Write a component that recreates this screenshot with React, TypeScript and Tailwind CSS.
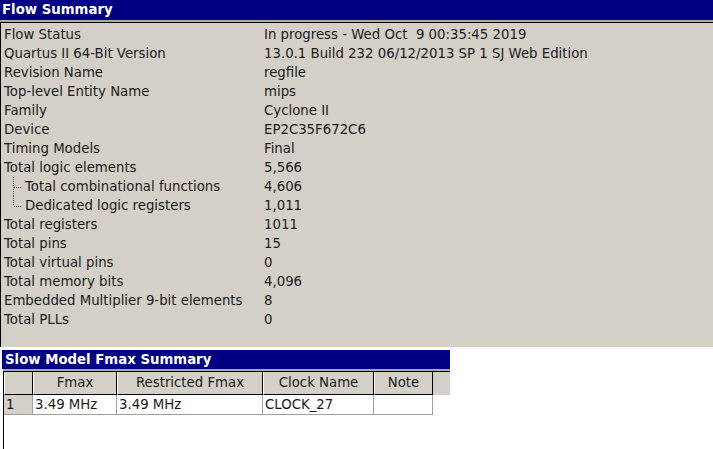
import React from 'react';

const rows: { label: string; value: string; tree?: 'mid' | 'end' }[] = [
  { label: 'Flow Status', value: 'In progress - Wed Oct\u00a0\u00a09 00:35:45 2019' },
  { label: 'Quartus II 64-Bit Version', value: '13.0.1 Build 232 06/12/2013 SP 1 SJ Web Edition' },
  { label: 'Revision Name', value: 'regfile' },
  { label: 'Top-level Entity Name', value: 'mips' },
  { label: 'Family', value: 'Cyclone II' },
  { label: 'Device', value: 'EP2C35F672C6' },
  { label: 'Timing Models', value: 'Final' },
  { label: 'Total logic elements', value: '5,566' },
  { label: 'Total combinational functions', value: '4,606', tree: 'mid' },
  { label: 'Dedicated logic registers', value: '1,011', tree: 'end' },
  { label: 'Total registers', value: '1011' },
  { label: 'Total pins', value: '15' },
  { label: 'Total virtual pins', value: '0' },
  { label: 'Total memory bits', value: '4,096' },
  { label: 'Embedded Multiplier 9-bit elements', value: '8' },
  { label: 'Total PLLs', value: '0' },
];

function TreeLine({ kind }: { kind: 'mid' | 'end' }) {
  return (
    <svg width="21" height="19" className="shrink-0">
      <line x1="9.5" y1="0" x2="9.5" y2={kind === 'mid' ? 19 : 10} stroke="#555" strokeDasharray="1 1" />
      <line x1="10" y1="10.5" x2="18" y2="10.5" stroke="#555" strokeDasharray="1 1" />
    </svg>
  );
}

const cols = [
  { w: 'w-[29px]', label: '' },
  { w: 'w-[84px]', label: 'Fmax' },
  { w: 'w-[146px]', label: 'Restricted Fmax' },
  { w: 'w-[111px]', label: 'Clock Name' },
  { w: 'w-[59px]', label: 'Note' },
];

const data = ['1', '3.49 MHz', '3.49 MHz', 'CLOCK_27', ''];

export default function App() {
  return (
    <div className="w-[713px] h-[449px] bg-white overflow-hidden text-[13.3px] text-[#1a1a1a]" style={{ fontFamily: '"DejaVu Sans", sans-serif' }}>
      {/* Flow Summary */}
      <div className="h-[20px] bg-[#000080] text-white font-bold pl-[2px] leading-[20px]">Flow Summary</div>
      <div className="border-t-2 border-[#a8a8a8]">
        <div className="border-t border-l border-black bg-[#d4d0c8] h-[325px] pt-[2px]">
          {rows.map((r) => (
            <div key={r.label} className="flex h-[19px] items-center leading-[19px]">
              <div className="w-[263px] flex items-center pl-[3px] shrink-0">
                {r.tree && <TreeLine kind={r.tree} />}
                <span>{r.label}</span>
              </div>
              <div>{r.value}</div>
            </div>
          ))}
        </div>
      </div>

      {/* Slow Model Fmax Summary */}
      <div className="mt-[3px] w-[448px] ml-[2px]">
        <div className="h-[19px] bg-[#000080] text-white font-bold pl-[3px] leading-[19px]">Slow Model Fmax Summary</div>
      </div>
      <div className="ml-[3px] w-[447px] border-t-2 border-[#a8a8a8]">
        <div className="border-t border-l border-black h-[80px]">
          <div className="flex bg-[#d4d0c8] h-[23px]">
            {cols.map((c, i) => (
              <div key={i} className={`${c.w} shrink-0 border-r border-b border-black border-l border-l-white text-center leading-[22px]`}>
                {c.label}
              </div>
            ))}
          </div>
          <div className="flex h-[20px]">
            {data.map((d, i) => (
              <div
                key={i}
                className={`${cols[i].w} shrink-0 border-r border-b border-[#a0a0a0] pl-[2px] leading-[20px] ${i === 0 ? 'bg-[#d4d0c8]' : 'bg-white'}`}
              >
                {d}
              </div>
            ))}
          </div>
        </div>
      </div>
      <div className="ml-[3px] w-px h-[40px] bg-black" />
    </div>
  );
}
